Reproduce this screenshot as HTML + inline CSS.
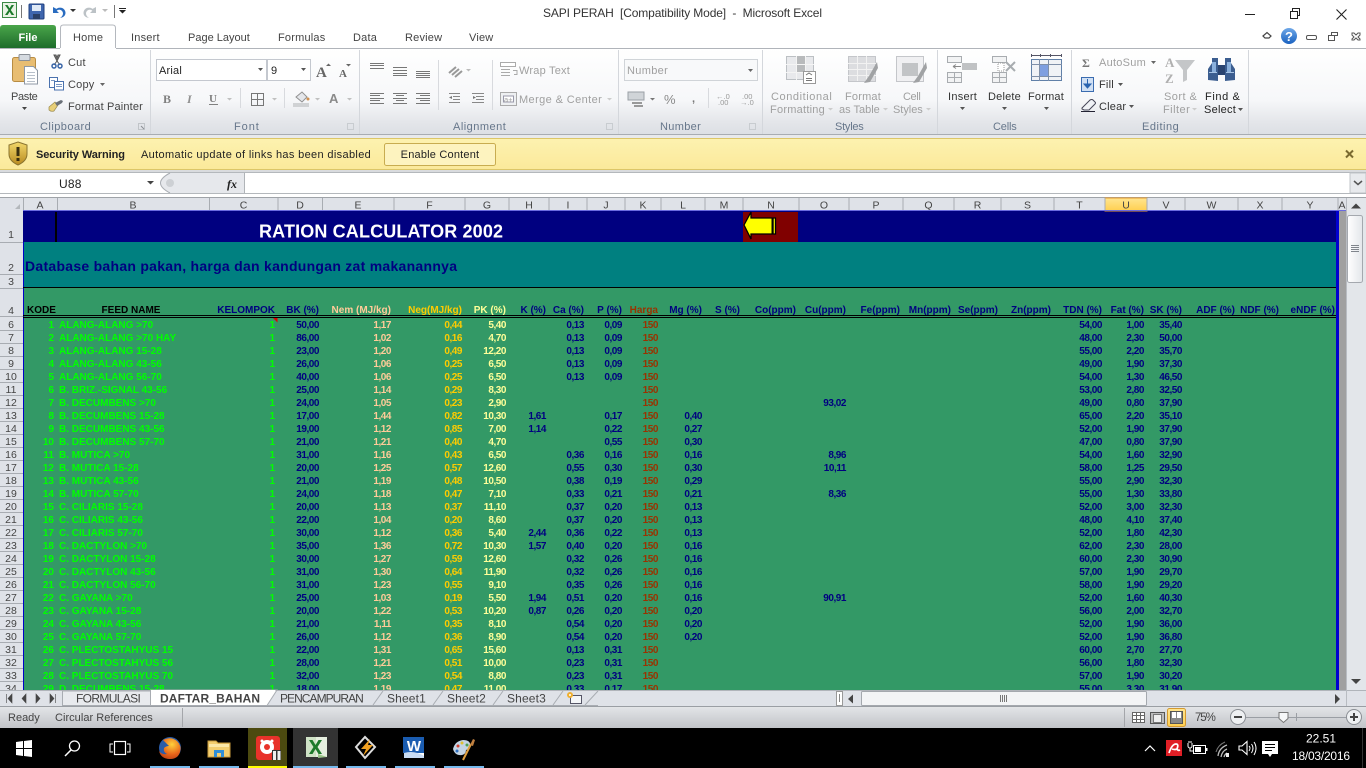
<!DOCTYPE html>
<html><head><meta charset="utf-8"><title>SAPI PERAH - Microsoft Excel</title>
<style>
html,body{margin:0;padding:0;width:1366px;height:768px;overflow:hidden;background:#fff}
#bg{position:absolute;left:0;top:0;width:1366px;height:768px}
.s{position:absolute;left:23px;width:1313px;overflow:hidden}
table{border-collapse:collapse;table-layout:fixed;font:bold 10px "Liberation Sans",Arial,sans-serif;color:#000080}
td{padding:0 3px 0 0;height:13px;line-height:13px;text-align:right;white-space:nowrap;overflow:visible}
#d td{letter-spacing:-.45px}
#d td:nth-child(1),#d td:nth-child(2),#d td:nth-child(3){color:#0f0;letter-spacing:0}
#d td:nth-child(2){text-align:left;padding-left:2px;padding-right:0}
#d td:nth-child(5){color:#fc9}#d td:nth-child(6){color:#fc0}#d td:nth-child(7){color:#ff9}#d td:nth-child(11){color:#930}
#ov{position:absolute;left:0;top:0}
#ov text{font-family:"Liberation Sans",Arial,sans-serif;font-size:11px;fill:#444;letter-spacing:.2px;white-space:pre}
#ov .g{fill:#a0a0a0}
#ov .l{fill:#66768a}
#ov .h{font-size:10.5px;fill:#444;letter-spacing:0;text-anchor:middle}
#ov .m{text-anchor:middle}
</style></head><body>
<svg id="bg" viewBox="0 0 1366 768">
<rect x="23" y="211" width="1313" height="31" fill="#000080"/>
<rect x="23" y="242" width="1313" height="45" fill="#008080"/>
<rect x="23" y="287" width="1313" height="403" fill="#396"/>
</svg>
<div class="s" style="top:304px;height:13px"><table style="width:1315px">
<colgroup><col width="34"><col width="152"><col width="69"><col width="44"><col width="72"><col width="71"><col width="44"><col width="40"><col width="38"><col width="38"><col width="36"><col width="44"><col width="38"><col width="56"><col width="50"><col width="54"><col width="51"><col width="47"><col width="53"><col width="51"><col width="42"><col width="38"><col width="53"><col width="44"><col width="56"></colgroup>
<tr><td style="color:#000;text-align:left;padding-left:4px;padding-right:0">KODE</td><td style="color:#000;text-align:center;padding:0 4px 0 0">FEED NAME</td><td>KELOMPOK</td><td>BK (%)</td><td style="color:#fc9">Nem (MJ/kg)</td><td style="color:#fc0">Neg(MJ/kg)</td><td style="color:#ff9">PK (%)</td><td>K (%)</td><td>Ca (%)</td><td>P (%)</td><td style="color:#930">Harga</td><td>Mg (%)</td><td>S (%)</td><td>Co(ppm)</td><td>Cu(ppm)</td><td>Fe(ppm)</td><td>Mn(ppm)</td><td>Se(ppm)</td><td>Zn(ppm)</td><td>TDN (%)</td><td>Fat (%)</td><td>SK (%)</td><td>ADF (%)</td><td>NDF (%)</td><td>eNDF (%)</td></tr>
</table></div>
<div class="s" style="top:319px;height:371px"><table id="d" style="width:1162px">
<colgroup><col width="34"><col width="152"><col width="69"><col width="44"><col width="72"><col width="71"><col width="44"><col width="40"><col width="38"><col width="38"><col width="36"><col width="44"><col width="38"><col width="56"><col width="50"><col width="54"><col width="51"><col width="47"><col width="53"><col width="51"><col width="42"><col width="38"></colgroup>
<tr><td>1<td>ALANG-ALANG &gt;70<td>1<td>50,00<td>1,17<td>0,44<td>5,40<td><td>0,13<td>0,09<td>150<td><td colspan=2><td><td colspan=4><td>54,00<td>1,00<td>35,40
<tr><td>2<td>ALANG-ALANG &gt;70 HAY<td>1<td>86,00<td>1,02<td>0,16<td>4,70<td><td>0,13<td>0,09<td>150<td><td colspan=2><td><td colspan=4><td>48,00<td>2,30<td>50,00
<tr><td>3<td>ALANG-ALANG 15-28<td>1<td>23,00<td>1,20<td>0,49<td>12,20<td><td>0,13<td>0,09<td>150<td><td colspan=2><td><td colspan=4><td>55,00<td>2,20<td>35,70
<tr><td>4<td>ALANG-ALANG 43-56<td>1<td>26,00<td>1,06<td>0,25<td>6,50<td><td>0,13<td>0,09<td>150<td><td colspan=2><td><td colspan=4><td>49,00<td>1,90<td>37,30
<tr><td>5<td>ALANG-ALANG 56-70<td>1<td>40,00<td>1,06<td>0,25<td>6,50<td><td>0,13<td>0,09<td>150<td><td colspan=2><td><td colspan=4><td>54,00<td>1,30<td>46,50
<tr><td>6<td>B. BRIZ.-SIGNAL 43-56<td>1<td>25,00<td>1,14<td>0,29<td>8,30<td><td><td><td>150<td><td colspan=2><td><td colspan=4><td>53,00<td>2,80<td>32,50
<tr><td>7<td>B. DECUMBENS &gt;70<td>1<td>24,00<td>1,05<td>0,23<td>2,90<td><td><td><td>150<td><td colspan=2><td>93,02<td colspan=4><td>49,00<td>0,80<td>37,90
<tr><td>8<td>B. DECUMBENS 15-28<td>1<td>17,00<td>1,44<td>0,82<td>10,30<td>1,61<td><td>0,17<td>150<td>0,40<td colspan=2><td><td colspan=4><td>65,00<td>2,20<td>35,10
<tr><td>9<td>B. DECUMBENS 43-56<td>1<td>19,00<td>1,12<td>0,85<td>7,00<td>1,14<td><td>0,22<td>150<td>0,27<td colspan=2><td><td colspan=4><td>52,00<td>1,90<td>37,90
<tr><td>10<td>B. DECUMBENS 57-70<td>1<td>21,00<td>1,21<td>0,40<td>4,70<td><td><td>0,55<td>150<td>0,30<td colspan=2><td><td colspan=4><td>47,00<td>0,80<td>37,90
<tr><td>11<td>B. MUTICA &gt;70<td>1<td>31,00<td>1,16<td>0,43<td>6,50<td><td>0,36<td>0,16<td>150<td>0,16<td colspan=2><td>8,96<td colspan=4><td>54,00<td>1,60<td>32,90
<tr><td>12<td>B. MUTICA 15-28<td>1<td>20,00<td>1,25<td>0,57<td>12,60<td><td>0,55<td>0,30<td>150<td>0,30<td colspan=2><td>10,11<td colspan=4><td>58,00<td>1,25<td>29,50
<tr><td>13<td>B. MUTICA 43-56<td>1<td>21,00<td>1,19<td>0,48<td>10,50<td><td>0,38<td>0,19<td>150<td>0,29<td colspan=2><td><td colspan=4><td>55,00<td>2,90<td>32,30
<tr><td>14<td>B. MUTICA 57-70<td>1<td>24,00<td>1,18<td>0,47<td>7,10<td><td>0,33<td>0,21<td>150<td>0,21<td colspan=2><td>8,36<td colspan=4><td>55,00<td>1,30<td>33,80
<tr><td>15<td>C. CILIARIS 15-28<td>1<td>20,00<td>1,13<td>0,37<td>11,10<td><td>0,37<td>0,20<td>150<td>0,13<td colspan=2><td><td colspan=4><td>52,00<td>3,00<td>32,30
<tr><td>16<td>C. CILIARIS 43-56<td>1<td>22,00<td>1,04<td>0,20<td>8,60<td><td>0,37<td>0,20<td>150<td>0,13<td colspan=2><td><td colspan=4><td>48,00<td>4,10<td>37,40
<tr><td>17<td>C. CILIARIS 57-70<td>1<td>30,00<td>1,12<td>0,36<td>5,40<td>2,44<td>0,36<td>0,22<td>150<td>0,13<td colspan=2><td><td colspan=4><td>52,00<td>1,80<td>42,30
<tr><td>18<td>C. DACTYLON &gt;70<td>1<td>35,00<td>1,36<td>0,72<td>10,30<td>1,57<td>0,40<td>0,20<td>150<td>0,16<td colspan=2><td><td colspan=4><td>62,00<td>2,30<td>28,00
<tr><td>19<td>C. DACTYLON 15-28<td>1<td>30,00<td>1,27<td>0,59<td>12,60<td><td>0,32<td>0,26<td>150<td>0,16<td colspan=2><td><td colspan=4><td>60,00<td>2,30<td>30,90
<tr><td>20<td>C. DACTYLON 43-56<td>1<td>31,00<td>1,30<td>0,64<td>11,90<td><td>0,32<td>0,26<td>150<td>0,16<td colspan=2><td><td colspan=4><td>57,00<td>1,90<td>29,70
<tr><td>21<td>C. DACTYLON 56-70<td>1<td>31,00<td>1,23<td>0,55<td>9,10<td><td>0,35<td>0,26<td>150<td>0,16<td colspan=2><td><td colspan=4><td>58,00<td>1,90<td>29,20
<tr><td>22<td>C. GAYANA &gt;70<td>1<td>25,00<td>1,03<td>0,19<td>5,50<td>1,94<td>0,51<td>0,20<td>150<td>0,16<td colspan=2><td>90,91<td colspan=4><td>52,00<td>1,60<td>40,30
<tr><td>23<td>C. GAYANA 15-28<td>1<td>20,00<td>1,22<td>0,53<td>10,20<td>0,87<td>0,26<td>0,20<td>150<td>0,20<td colspan=2><td><td colspan=4><td>56,00<td>2,00<td>32,70
<tr><td>24<td>C. GAYANA 43-56<td>1<td>21,00<td>1,11<td>0,35<td>8,10<td><td>0,54<td>0,20<td>150<td>0,20<td colspan=2><td><td colspan=4><td>52,00<td>1,90<td>36,00
<tr><td>25<td>C. GAYANA 57-70<td>1<td>26,00<td>1,12<td>0,36<td>8,90<td><td>0,54<td>0,20<td>150<td>0,20<td colspan=2><td><td colspan=4><td>52,00<td>1,90<td>36,80
<tr><td>26<td>C. PLECTOSTAHYUS 15<td>1<td>22,00<td>1,31<td>0,65<td>15,60<td><td>0,13<td>0,31<td>150<td><td colspan=2><td><td colspan=4><td>60,00<td>2,70<td>27,70
<tr><td>27<td>C. PLECTOSTAHYUS 56<td>1<td>28,00<td>1,21<td>0,51<td>10,00<td><td>0,23<td>0,31<td>150<td><td colspan=2><td><td colspan=4><td>56,00<td>1,80<td>32,30
<tr><td>28<td>C. PLECTOSTAHYUS 70<td>1<td>32,00<td>1,23<td>0,54<td>8,80<td><td>0,23<td>0,31<td>150<td><td colspan=2><td><td colspan=4><td>57,00<td>1,90<td>30,20
<tr><td>29<td>D. DECUMBENS 15-28<td>1<td>18,00<td>1,19<td>0,47<td>11,00<td><td>0,33<td>0,17<td>150<td><td colspan=2><td><td colspan=4><td>55,00<td>3,30<td>31,90
</table></div>
<svg id="ov" width="1366" height="768" viewBox="0 0 1366 768">
<defs>
<linearGradient id="rb" x1="0" y1="0" x2="0" y2="1"><stop offset="0" stop-color="#fff"/><stop offset=".6" stop-color="#f6f7f9"/><stop offset=".85" stop-color="#e4e6ea"/><stop offset="1" stop-color="#dcdfe4"/></linearGradient>
<linearGradient id="fl" x1="0" y1="0" x2="0" y2="1"><stop offset="0" stop-color="#4aa54a"/><stop offset="1" stop-color="#1d6c2b"/></linearGradient>
<linearGradient id="st" x1="0" y1="0" x2="0" y2="1"><stop offset="0" stop-color="#e4e6e9"/><stop offset="1" stop-color="#c2c4c8"/></linearGradient>
<linearGradient id="sw" x1="0" y1="0" x2="0" y2="1"><stop offset="0" stop-color="#fdf2b0"/><stop offset="1" stop-color="#fbe99a"/></linearGradient>
<linearGradient id="gd" x1="0" y1="0" x2="0" y2="1"><stop offset="0" stop-color="#ffe590"/><stop offset="1" stop-color="#ffcf4f"/></linearGradient>
<linearGradient id="sb" x1="0" y1="0" x2="1" y2="0"><stop offset="0" stop-color="#fff"/><stop offset="1" stop-color="#e3e6ea"/></linearGradient>
<linearGradient id="sh" x1="0" y1="0" x2="0" y2="1"><stop offset="0" stop-color="#f2d86a"/><stop offset="1" stop-color="#b88a20"/></linearGradient>
<radialGradient id="ff" cx=".6" cy=".3" r=".8"><stop offset="0" stop-color="#ffd23c"/><stop offset=".6" stop-color="#e8651a"/><stop offset="1" stop-color="#b83a10"/></radialGradient>
<linearGradient id="hb" x1="0" y1="0" x2="0" y2="1"><stop offset="0" stop-color="#6fa8e8"/><stop offset="1" stop-color="#1a62c0"/></linearGradient>
</defs>

<!-- title bar / tabs -->
<rect width="1366" height="48" fill="#fff"/>
<text x="543" y="17" textLength="279" style="font-size:12px;fill:#333;letter-spacing:0">SAPI PERAH  [Compatibility Mode]  -  Microsoft Excel</text>
<rect x="2.5" y="2.5" width="14" height="15" fill="#e9f3e4" stroke="#3c8a46"/><path d="M5 5l3.5 5L5 15h2.6l2-3.2 2 3.2h2.6l-3.4-5L14 5h-2.4l-2 3.2L7.5 5z" fill="#1d7a2b"/>
<path d="M21.5 5v13M114.5 5v13" stroke="#777"/>
<rect x="29" y="4" width="15" height="15" rx="1" fill="#3f66ae" stroke="#1f3f7e"/><rect x="32" y="5" width="9" height="6" fill="#dfe9f6"/><rect x="33" y="14" width="7" height="5" fill="#2a3f66"/>
<path d="M53 7v6h6l-2.3-2.3c2.6-2 6-.6 6.3 2.6 0 2-1 3.6-3 4.6 4-.4 6-3 5.4-6-.8-4-5.6-5.6-9-3z" fill="#2a6cc0"/>
<path d="M70 9h6l-3 3z" fill="#333"/>
<path d="M96 7v6h-6l2.3-2.3c-2.6-2-6-.6-6.3 2.6 0 2 1 3.6 3 4.6-4-.4-6-3-5.4-6 .8-4 5.6-5.6 9-3z" fill="#bcc2c6"/>
<path d="M102 9h6l-3 3z" fill="#bbb"/>
<path d="M119 8h7v1h-7zM119 10h7l-3.5 3.5z" fill="#222"/>
<path d="M1245 14.500h10" stroke="#222" stroke-width="1"/>
<path d="M1290.500 11.500h7v7h-7zM1292.500 11v-2.500h7v7h-2" fill="none" stroke="#222"/>
<path d="M1336.500 9.500l10 10M1346.500 9.500l-10 10" stroke="#222" stroke-width="1.100"/>
<path d="M1263 36l4-3.500 4 3.500-2 2h-4z" fill="none" stroke="#444" stroke-width="1.200"/>
<circle cx="1289" cy="36" r="8" fill="url(#hb)"/><text x="1289" y="41" class="m" style="font-size:13px;font-weight:bold;fill:#fff;letter-spacing:0">?</text>
<rect x="1306.500" y="35.500" width="10" height="4" rx="1.500" fill="#fff" stroke="#555"/>
<path d="M1331.500 35.500h6v-3h-6zM1328.500 35.500h6v5h-6z" fill="#fff" stroke="#555"/>
<path d="M1352 33l2 0 2 2 2-2 2 0v2l-2 2 2 2v1h-2l-2-2-2 2h-2v-1l2-2-2-2z" fill="#fff" stroke="#555"/>

<path d="M0 28q0-3 3-3h50q3 0 3 3v20H0z" fill="url(#fl)"/>
<text x="28" y="41" class="m" style="font-weight:bold;fill:#fff;letter-spacing:0">File</text>
<path d="M60.500 49v-21q0-3 3-3h49q3 0 3 3v21" fill="#fff" stroke="#b4b8be"/>
<rect x="0" y="48" width="1366" height="87" fill="url(#rb)"/>
<path d="M0 48.500h60M116 48.500h1250" stroke="#b0b4ba"/>
<rect x="61" y="47" width="54" height="3" fill="#fff"/>
<text x="73" y="41">Home</text><text x="131" y="41">Insert</text><text x="188" y="41" textLength="62">Page Layout</text><text x="278" y="41">Formulas</text><text x="353" y="41">Data</text><text x="405" y="41">Review</text><text x="469" y="41">View</text>

<!-- ribbon separators -->
<path d="M150.500 50v84M359.500 50v84M618.500 50v84M762.500 50v84M937.500 50v84M1071.500 50v84M1248.500 50v84" stroke="#d4d7dc"/>
<path d="M240.500 88v20M284.500 88v20M438.500 60v50M492.500 60v50M708.500 88v20" stroke="#d8dade"/>
<rect y="134" width="1366" height="1" fill="#a8acb2"/>
<rect y="135" width="1366" height="3" fill="#e8e9eb"/>

<!-- clipboard -->
<rect x="12.500" y="57.500" width="23" height="24" rx="2" fill="#e8bd72" stroke="#b88c42"/><rect x="19" y="54.500" width="11" height="6" rx="1" fill="#d5dae0" stroke="#8a8f96"/>
<path d="M24.500 66.500h9l4 4v13.500h-13z" fill="#fff" stroke="#8f98a4"/><path d="M27 72.500h8M27 75.500h8M27 78.500h8M27 81.500h8" stroke="#b8c0ca"/>
<text x="11" y="100" textLength="27">Paste</text><path d="M22 107h5l-2.500 3z" fill="#444"/>
<path d="M54 55l3 6 3-6-2 0-1 3-1-3zM57 61l-3 4M57 61l3 4" fill="#888" stroke="#555"/><circle cx="54" cy="66" r="2" fill="none" stroke="#3a66a8" stroke-width="1.500"/><circle cx="60" cy="66" r="2" fill="none" stroke="#3a66a8" stroke-width="1.500"/>
<text x="68" y="66">Cut</text>
<rect x="49.500" y="77.500" width="8" height="10" fill="#fff" stroke="#4a72ae"/><rect x="54.500" y="81.500" width="9" height="8.500" fill="#fff" stroke="#4a72ae"/><path d="M56 84.500h6M56 86.500h6M51 80.500h4" stroke="#7a98c4"/>
<text x="68" y="88">Copy</text><path d="M100 83h5l-2.500 3z" fill="#666"/>
<path d="M49 107l6-5 3 3-4 6q-3 1-5-1z" fill="#e8cf78" stroke="#9a8a4c" stroke-width=".7"/><path d="M55 103l6-3 2 1-1 2-5 3z" fill="#6a7078"/>
<text x="68" y="110" textLength="75">Format Painter</text>
<text x="40" y="130" class="l" textLength="51">Clipboard</text>
<path d="M138.500 123.500h6v6h-6z" fill="none" stroke="#c0c4c8"/><path d="M141 126l3 3" stroke="#8a8e94"/>

<!-- font -->
<rect x="156.500" y="59.500" width="110" height="21" fill="#fff" stroke="#c4c8cf"/><rect x="267.500" y="59.500" width="43" height="21" fill="#fff" stroke="#c4c8cf"/>
<text x="159" y="74" style="fill:#222">Arial</text><text x="271" y="74" style="fill:#222">9</text>
<path d="M258 68h5l-2.500 3zM301 68h5l-2.500 3z" fill="#555"/>
<text x="316" y="77" style="font:bold 15px 'Liberation Serif',serif;fill:#666;letter-spacing:0">A</text><path d="M326 66l2.500-2.500 2.500 2.500z" fill="#666"/>
<text x="339" y="77" style="font:bold 11px 'Liberation Serif',serif;fill:#666;letter-spacing:0">A</text><path d="M346 64h5l-2.500 2.500z" fill="#666"/>
<text x="163" y="103" style="font:bold 12px 'Liberation Serif',serif;fill:#808080;letter-spacing:0">B</text>
<text x="187" y="103" style="font:italic bold 12px 'Liberation Serif',serif;fill:#909090;letter-spacing:0">I</text>
<text x="209" y="102" style="font:bold 11px 'Liberation Serif',serif;fill:#808080;letter-spacing:0">U</text><path d="M209 104.500h9" stroke="#808080"/>
<path d="M227 98h5l-2.500 2.500zM272 98h5l-2.500 2.500zM315 98h5l-2.500 2.500zM347 98h5l-2.500 2.500z" fill="#c0c0c0"/>
<path d="M251.500 93.500h12v12h-12zM257.500 93.500v12M251.500 99.500h12" fill="none" stroke="#777"/>
<path d="M296 97l6-5 5 5-5 5z" fill="#e4e6ea" stroke="#909090"/><rect x="293" y="103" width="16" height="4" fill="#d0d2d4"/><circle cx="308" cy="99" r="1.500" fill="#d09050"/>
<text x="329" y="103" style="font:bold 13px 'Liberation Sans',sans-serif;fill:#8a8a8a;letter-spacing:0">A</text>
<text x="234" y="130" class="l" textLength="25">Font</text>
<path d="M347.500 123.500h6v6h-6z" fill="none" stroke="#c8ccd0"/>

<!-- alignment -->
<path d="M370 63.500h14M370 65.500h14M370 68.500h14M393 67.500h14M393 70.500h14M393 73.500h14M393 75.500h14M416 71.500h14M416 73.500h14M416 75.500h14M416 77.500h14" stroke="#777"/>
<path d="M370 93.500h14M370 95.500h10M370 98.500h14M370 100.500h10M370 103.500h14M393 93.500h14M396 95.500h8M393 98.500h14M396 100.500h8M393 103.500h14M416 93.500h14M420 95.500h10M416 98.500h14M420 100.500h10M416 103.500h14" stroke="#777"/>
<path d="M449 73l7-6M452 75l7-6M455 77l7-6" stroke="#999" stroke-width="2"/><path d="M466 69h5l-2.500 2.500z" fill="#bbb"/>
<path d="M449 93.500h11M453 96.500h7M453 99.500h7M449 102.500h11M472 93.500h12M476 96.500h8M476 99.500h8M472 102.500h12" stroke="#888"/><path d="M452 96l-3 1.500 3 1.500zM473 96l3 1.500-3 1.500z" fill="#777"/>
<rect x="500.500" y="62.500" width="15" height="4" fill="#fff" stroke="#aaa"/><path d="M501 69.500h9M501 72.500h9M501 75.500h9" stroke="#aaa"/><path d="M513 70.500h4v4h-3" fill="none" stroke="#aaa"/>
<text x="519" y="74" class="g" textLength="51">Wrap Text</text>
<rect x="500.500" y="92.500" width="16" height="13" fill="#eef0f2" stroke="#aaa"/><rect x="503.500" y="96" width="10" height="6" fill="#fff" stroke="#99a"/><text x="504" y="102" class="g" style="font-size:7.500px;letter-spacing:0">a+</text>
<text x="519" y="103" class="g" textLength="83">Merge &amp; Center</text><path d="M607 98h5l-2.500 2.500z" fill="#ccc"/>
<text x="453" y="130" class="l" textLength="53">Alignment</text>
<path d="M606.500 123.500h6v6h-6z" fill="none" stroke="#c8ccd0"/>

<!-- number -->
<rect x="624.500" y="59.500" width="133" height="21" fill="#f8f9fa" stroke="#d0d4d8"/>
<text x="627" y="74" class="g" textLength="41">Number</text><path d="M748 69h5l-2.500 3z" fill="#666"/>
<rect x="628" y="92" width="16" height="8" fill="#d0d4d8" stroke="#9aa0a6"/><path d="M632 103h10M634 106h9" stroke="#999" stroke-width="2"/>
<path d="M650 98h5l-2.500 2.500z" fill="#777"/>
<text x="664" y="104" style="font-size:13px;fill:#8a8a8a;letter-spacing:0">%</text>
<text x="692" y="102" style="font:bold 11px 'Liberation Sans',sans-serif;fill:#777">,</text>
<text x="716" y="99" style="font-size:7.500px;fill:#999;letter-spacing:0">←.0</text><text x="718" y="105" style="font-size:7.500px;fill:#999;letter-spacing:0">.00</text>
<text x="742" y="99" style="font-size:7.500px;fill:#999;letter-spacing:0">.00</text><text x="740" y="105" style="font-size:7.500px;fill:#999;letter-spacing:0">→.0</text>
<text x="660" y="130" class="l" textLength="41">Number</text>
<path d="M749.500 123.500h6v6h-6z" fill="none" stroke="#c8ccd0"/>

<!-- styles -->
<g stroke="#bcc0c4" fill="#e8e9ec"><rect x="786.500" y="56.500" width="27" height="23"/></g>
<path d="M796 56h9v16h-9z" fill="#b8babc"/><path d="M786 64.500h28M786 72.500h28M796.500 56v24M805.500 56v24" stroke="#f4f4f4"/>
<rect x="803.500" y="71.500" width="12" height="12" fill="#fff" stroke="#999"/><path d="M806 75l3-2 3 2M806 78.500h6M806 80.500h6" fill="none" stroke="#777"/>
<text x="771" y="100" class="g" textLength="61">Conditional</text><text x="770" y="113" class="g" textLength="55">Formatting</text><path d="M828 108h5l-2.500 2.500z" fill="#ccc"/>
<rect x="848.500" y="56.500" width="27" height="25" fill="#dcdde0" stroke="#c4c6ca"/><path d="M848 63.500h28M848 69.500h28M848 75.500h28M857.500 56v25M866.500 56v25" stroke="#f2f2f2"/>
<path d="M877 62l-8 14-5 7 6-1 8-14z" fill="#a0a2a4"/>
<text x="845" y="100" class="g" textLength="36">Format</text><text x="839" y="113" class="g" textLength="41">as Table</text><path d="M883 108h5l-2.500 2.500z" fill="#ccc"/>
<rect x="896.500" y="56.500" width="27" height="25" fill="#f0f0f2" stroke="#c4c6ca"/><rect x="902" y="63" width="16" height="13" fill="#c2c4c6"/>
<path d="M926 62l-8 14-5 7 6-1 8-14z" fill="#a0a2a4"/>
<text x="903" y="100" class="g" textLength="18">Cell</text><text x="893" y="113" class="g" textLength="30">Styles</text><path d="M926 108h5l-2.500 2.500z" fill="#ccc"/>
<text x="835" y="130" class="l" textLength="29">Styles</text>

<!-- cells -->
<g fill="#f2f3f4" stroke="#a8acb0"><rect x="947.500" y="56.500" width="14" height="6"/><rect x="947.500" y="72.500" width="14" height="10"/><path d="M954.500 72.500v10M947.500 77.500h14"/></g>
<rect x="962" y="63" width="15" height="7" fill="#c0c2c4"/><path d="M953 66.500h8M953 66.500l3-2M953 66.500l3 2" stroke="#888" fill="none"/>
<text x="948" y="100" textLength="29" style="fill:#333">Insert</text><path d="M960 107h5l-2.500 3z" fill="#555"/>
<g fill="#f2f3f4" stroke="#a8acb0"><rect x="992.500" y="56.500" width="14" height="6"/><rect x="992.500" y="72.500" width="14" height="10"/><path d="M999.500 72.500v10M992.500 77.500h14"/></g>
<path d="M998 63h6v8h-6z" fill="#fff" stroke="#999" stroke-dasharray="1 1"/><path d="M1006 62l9 9M1015 62l-9 9" stroke="#a8acb0" stroke-width="2"/>
<text x="988" y="100" textLength="33" style="fill:#333">Delete</text><path d="M1002 107h5l-2.500 3z" fill="#555"/>
<rect x="1031.500" y="59.500" width="30" height="21" fill="#f0f2f6" stroke="#6080a8"/><rect x="1039" y="64" width="9" height="12" fill="#7f9fe0"/><path d="M1039.500 59v22M1048.500 59v22M1031 64.500h31M1031 76.500h31" stroke="#7f8fa8"/>
<path d="M1031.500 55.500h30M1031.500 54v3M1061.500 54v3M1040.500 54v3M1050.500 54v3" stroke="#556"/>
<text x="1028" y="100" textLength="36" style="fill:#333">Format</text><path d="M1044 107h5l-2.500 3z" fill="#555"/>
<text x="993" y="130" class="l" textLength="24">Cells</text>

<!-- editing -->
<text x="1082" y="67" style="font:bold 12px 'Liberation Serif',serif;fill:#777;letter-spacing:0">Σ</text>
<text x="1099" y="66" class="g" textLength="47">AutoSum</text><path d="M1151 61h5l-2.500 3z" fill="#666"/>
<rect x="1081.500" y="77.500" width="12" height="14" fill="#d0e0f4" stroke="#3a6cb0"/><path d="M1087.500 79v8M1084 84l3.500 4 3.500-4z" fill="#2a64b0" stroke="#2a64b0"/>
<text x="1099" y="88" style="fill:#333">Fill</text><path d="M1118 83h5l-2.500 3z" fill="#555"/>
<path d="M1082 108l8-8q2-1 3 0l2 2q1 1 0 2l-6 6h-5l-2-1z" fill="#f0f2f6" stroke="#445"/><path d="M1081 111.500h14" stroke="#223"/>
<text x="1099" y="110" style="fill:#333">Clear</text><path d="M1129 105h5l-2.500 3z" fill="#555"/>
<path d="M1175 60h20l-8 10v10l-4 2V70z" fill="#c4c6c8"/><text x="1165" y="67" style="font:bold 13px 'Liberation Serif',serif;fill:#b0b0b0;letter-spacing:0">A</text><text x="1165" y="83" style="font:bold 13px 'Liberation Serif',serif;fill:#b0b0b0;letter-spacing:0">Z</text>
<text x="1164" y="100" class="g" textLength="33">Sort &amp;</text><text x="1163" y="113" class="g" textLength="27">Filter</text><path d="M1192 108h5l-2.500 2.500z" fill="#ccc"/>
<path d="M1208 80v-11l4-6v-5h6v23zM1225 81v-23h6v5l4 6v11z" fill="#3c5e90"/><path d="M1212 62h4v10h-4zM1227 62h4v10h-4z" fill="#8ab0dc"/><rect x="1218" y="65" width="7" height="10" fill="#2a4470"/><path d="M1209 72.500h8M1226 72.500h8" stroke="#a8c4e4"/>
<text x="1205" y="100" textLength="35" style="fill:#222">Find &amp;</text><text x="1204" y="113" textLength="32" style="fill:#222">Select</text><path d="M1238 108h5l-2.500 3z" fill="#555"/>
<text x="1142" y="130" class="l" textLength="37">Editing</text>

<!-- security bar -->
<rect y="138" width="1366" height="32" fill="url(#sw)"/><path d="M0 138.500h1366M0 169.500h1366" stroke="#dcc668"/>
<rect y="170" width="1366" height="2" fill="#d9dbde"/>
<path d="M18 142l9 3v9q0 7-9 11-9-4-9-11v-9z" fill="url(#sh)" stroke="#8a7430"/><rect x="16.500" y="147" width="3" height="9" fill="#3a2f10"/><rect x="16.500" y="158" width="3" height="3" fill="#3a2f10"/>
<text x="36" y="158" textLength="89" style="font-weight:bold;fill:#222;letter-spacing:0">Security Warning</text>
<text x="141" y="158" textLength="230" style="fill:#222">Automatic update of links has been disabled</text>
<rect x="384.500" y="143.500" width="111" height="22" rx="2" fill="#fdf3bf" stroke="#c8ac50"/>
<text x="440" y="158" class="m" style="fill:#222">Enable Content</text>
<path d="M1346 150.500l7 7M1353 150.500l-7 7" stroke="#7a6a30" stroke-width="2"/>

<!-- formula bar -->
<rect y="172" width="1366" height="26" fill="#fff"/>
<rect y="172" width="1366" height="1" fill="#b4b8bc"/>
<path d="M170 173q-19 10 0 20h74v-20z" fill="#e6e8ec"/>
<path d="M170 173q-19 10 0 20" fill="none" stroke="#a8acb2"/><circle cx="170" cy="183" r="4" fill="#cdd0d4"/>
<text x="59" y="188" style="font-size:12px;fill:#222;letter-spacing:.2px">U88</text>
<path d="M147 181h7l-3.500 3.500z" fill="#444"/>
<text x="227" y="188" style="font:italic bold 12px 'Liberation Serif',serif;fill:#222;letter-spacing:0">fx</text>
<path d="M244.500 173v20" stroke="#b0b4b8"/>
<rect x="1350" y="173" width="16" height="20" fill="#e8eaed" stroke="#c0c4c8"/><path d="M1354 181l4 3.500 4-3.500" fill="none" stroke="#555" stroke-width="1.500"/>
<rect y="193" width="1366" height="1" fill="#b4b8bc"/>
<rect y="197" width="1366" height="1" fill="#9fa3a8"/>

<!-- col headers -->
<rect y="198" width="1366" height="13" fill="#dfe2e8"/>
<rect x="1105" y="198" width="42" height="13" fill="url(#gd)" stroke="#e49a30"/>
<path d="M23.500 198v13M57.500 198v13M209.500 198v13M278 198v13M322.500 198v13M394 198v13M465 198v13M509 198v13M549 198v13M587 198v13M625 198v13M661 198v13M705 198v13M743 198v13M799 198v13M849 198v13M903 198v13M954 198v13M1001 198v13M1054 198v13M1105 198v13M1147 198v13M1185 198v13M1238 198v13M1282 198v13M1338 198v13" stroke="#a8acb2"/>
<path d="M15 209l5-5v5z" fill="#b4b8bc"/>
<g class="hd"><text class="h" y="208.500"><tspan x="40">A</tspan><tspan x="133">B</tspan><tspan x="243.500">C</tspan><tspan x="300">D</tspan><tspan x="358">E</tspan><tspan x="429.500">F</tspan><tspan x="487">G</tspan><tspan x="529">H</tspan><tspan x="568">I</tspan><tspan x="606">J</tspan><tspan x="643">K</tspan><tspan x="683">L</tspan><tspan x="724">M</tspan><tspan x="771">N</tspan><tspan x="824">O</tspan><tspan x="876">P</tspan><tspan x="928.500">Q</tspan><tspan x="977.500">R</tspan><tspan x="1027.500">S</tspan><tspan x="1079.500">T</tspan><tspan x="1126">U</tspan><tspan x="1166">V</tspan><tspan x="1211.500">W</tspan><tspan x="1260">X</tspan><tspan x="1310">Y</tspan><tspan x="1342">A</tspan></text></g>
<rect x="23" y="210" width="1323" height="1" fill="#6a6ae0"/>

<!-- row header -->
<rect y="211" width="23" height="479" fill="#dfe2e8"/>
<path d="M0 242.500h23M0 274.500h23M0 288.500h23M0 316.500h23M0 330.500h23M0 343.500h23M0 356.500h23M0 369.500h23M0 382.500h23M0 395.500h23M0 408.500h23M0 421.500h23M0 434.500h23M0 447.500h23M0 460.500h23M0 473.500h23M0 486.500h23M0 499.500h23M0 512.500h23M0 525.500h23M0 538.500h23M0 551.500h23M0 564.500h23M0 577.500h23M0 590.500h23M0 603.500h23M0 616.500h23M0 629.500h23M0 642.500h23M0 655.500h23M0 668.500h23M0 681.500h23" stroke="#a8acb2"/>
<text class="h"><tspan x="11" y="238">1</tspan><tspan x="11" y="271">2</tspan><tspan x="11" y="285">3</tspan><tspan x="11" y="314">4</tspan><tspan x="11" y="328">6</tspan><tspan x="11" y="341">7</tspan><tspan x="11" y="354">8</tspan><tspan x="11" y="367">9</tspan><tspan x="11" y="380">10</tspan><tspan x="11" y="393">11</tspan><tspan x="11" y="406">12</tspan><tspan x="11" y="419">13</tspan><tspan x="11" y="432">14</tspan><tspan x="11" y="445">15</tspan><tspan x="11" y="458">16</tspan><tspan x="11" y="471">17</tspan><tspan x="11" y="484">18</tspan><tspan x="11" y="497">19</tspan><tspan x="11" y="510">20</tspan><tspan x="11" y="523">21</tspan><tspan x="11" y="536">22</tspan><tspan x="11" y="549">23</tspan><tspan x="11" y="562">24</tspan><tspan x="11" y="575">25</tspan><tspan x="11" y="588">26</tspan><tspan x="11" y="601">27</tspan><tspan x="11" y="614">28</tspan><tspan x="11" y="627">29</tspan><tspan x="11" y="640">30</tspan><tspan x="11" y="653">31</tspan><tspan x="11" y="666">32</tspan><tspan x="11" y="679">33</tspan><tspan x="11" y="692">34</tspan></text>

<!-- sheet decorations -->
<rect x="23" y="242" width="1" height="448" fill="#0000c8"/>
<rect x="55" y="212" width="2" height="30" fill="#000"/>
<text x="259" y="237.500" textLength="244" style="font-size:18px;font-weight:bold;fill:#fff;letter-spacing:0">RATION CALCULATOR 2002</text>
<text x="25" y="271" textLength="432" style="font-size:14px;font-weight:bold;fill:#000080;letter-spacing:0">Database bahan pakan, harga dan kandungan zat makanannya</text>
<rect x="23" y="287" width="1313" height="1" fill="#000"/>
<path d="M23 315.500h1313M23 317.500h1313" stroke="#000"/><path d="M1336 316.500h10" stroke="#6a5a30"/>
<path d="M273 318h4.500v4.500z" fill="#e00000"/>
<rect x="743" y="212" width="55" height="30" fill="#800000"/>
<path d="M744 225l7-13v6h24.500v16h-24.500v5z" fill="#ff0" stroke="#000" stroke-width="1.300"/>
<rect x="771.500" y="218" width="2.200" height="16" fill="#000"/>
<rect x="1336" y="211" width="3" height="479" fill="#0000d0"/>
<rect x="1339" y="211" width="7" height="479" fill="#a0a0a0"/>

<!-- v scrollbar -->
<rect x="1346" y="198" width="20" height="492" fill="#e3e6ea"/>
<path d="M1346.500 198v492" stroke="#b8bcc2"/>
<path d="M1351 208.500l5-5 5 5z" fill="#444"/>
<rect x="1347.500" y="215.500" width="15" height="67" rx="2" fill="url(#sb)" stroke="#a4a8ae"/>
<path d="M1351 245.500h8M1351 247.500h8M1351 249.500h8M1351 251.500h8" stroke="#80858c"/>
<path d="M1351 679l5 5 5-5z" fill="#444"/>

<!-- sheet tabs -->
<rect y="690" width="1366" height="16" fill="#dfe2e8"/>
<rect y="690" width="1366" height="1" fill="#b0b4ba"/>
<path d="M6.500 694v9M12 694l-4 4.500 4 4.500zM26 694l-4 4.500 4 4.500zM36 694l4 4.500-4 4.500zM50 694l4 4.500-4 4.500zM55.500 694v9" fill="#444" stroke="#444" stroke-width=".6"/>
<path d="M62.500 691v14.500h88v-14.500z" fill="#e8eaee" stroke="#a8acb2"/>
<text x="76" y="702.500" textLength="65" style="font-size:12px">FORMULASI</text>
<path d="M150.500 690v15.500h116.500l10-15.500z" fill="#fff" stroke="#a8acb2"/>
<rect x="151" y="690" width="124" height="1" fill="#fff"/>
<text x="160" y="702.500" textLength="100" style="font-size:12px;font-weight:bold;fill:#444;letter-spacing:0">DAFTAR_BAHAN</text>
<path d="M267 705.500h331M373 705l10-14M433 705l10-14M493 705l10-14M553 705l10-14M585 705l13-14" fill="none" stroke="#a8acb2"/>
<text x="280" y="702.500" textLength="84" style="font-size:12px">PENCAMPURAN</text>
<text x="387" y="702.500" textLength="39" style="font-size:12px">Sheet1</text>
<text x="447" y="702.500" textLength="39" style="font-size:12px">Sheet2</text>
<text x="507" y="702.500" textLength="39" style="font-size:12px">Sheet3</text>
<rect x="570.500" y="695.500" width="11" height="8" fill="#f4f6f8" stroke="#556"/><circle cx="570" cy="695" r="3" fill="#f0b030"/><circle cx="570" cy="695" r="1" fill="#fff"/>
<rect x="836.500" y="691.500" width="6" height="14" fill="#fff" stroke="#999"/><path d="M839.500 694v8" stroke="#888"/>
<path d="M853 694.500v9l-5-4.500z" fill="#444"/>
<rect x="861.500" y="691.500" width="285" height="14" rx="1" fill="#f3f4f6" stroke="#a4a8ae"/>
<path d="M1000.500 695v7M1002.500 695v7M1004.500 695v7M1006.500 695v7" stroke="#777"/>
<path d="M1335 694v10l5-5z" fill="#444"/>
<path d="M1346.500 690v16" stroke="#b8bcc2"/>

<!-- status bar -->
<rect y="706" width="1366" height="22" fill="url(#st)"/>
<rect y="706" width="1366" height="1" fill="#9a9ea4"/>
<text x="8" y="721" textLength="32">Ready</text><text x="55" y="721" textLength="98">Circular References</text>
<path d="M182.500 708v19M1124.500 708v19" stroke="#a4a6aa"/>
<path d="M1132.500 712.500h12v10h-12zM1136.500 712.500v10M1140.500 712.500v10M1132.500 715.500h12M1132.500 719.500h12" fill="#fff" stroke="#666"/>
<rect x="1150.500" y="712.500" width="14" height="11" fill="#bbb" stroke="#555"/><rect x="1153.500" y="714.500" width="8" height="8" fill="#eee" stroke="#777"/>
<rect x="1167.500" y="708.500" width="18" height="18" rx="2" fill="url(#gd)" stroke="#d49a30"/>
<rect x="1170.500" y="711.500" width="12" height="12" fill="#888" stroke="#555"/><rect x="1172" y="712" width="4" height="6" fill="#fff"/><rect x="1177" y="712" width="4" height="6" fill="#fff"/>
<text x="1195" y="721" textLength="21" style="font-size:11.500px">75%</text>
<circle cx="1238" cy="717" r="7.500" fill="#eef0f2" stroke="#8a8e94"/><path d="M1234 717h8" stroke="#444" stroke-width="2"/>
<path d="M1246 717.500h100" stroke="#9a9ea4"/><path d="M1296.500 713v8" stroke="#9a9ea4"/>
<path d="M1279 712.500h9v6l-4.500 4-4.500-4z" fill="#f6f7f8" stroke="#777"/>
<circle cx="1354" cy="717" r="7.500" fill="#eef0f2" stroke="#8a8e94"/><path d="M1350 717h8M1354 713v8" stroke="#444" stroke-width="2"/>

<!-- taskbar -->
<rect y="728" width="1366" height="40" fill="#000"/>
<path d="M16 742l7-1v7h-7zM24 741l8-1v8h-8zM16 749h7v7l-7-1zM24 749h8v8l-8-1z" fill="#fff"/>
<circle cx="74.500" cy="746" r="5" fill="none" stroke="#fff" stroke-width="1.300"/><path d="M71 750l-6 6" stroke="#fff" stroke-width="1.500"/>
<rect x="114.500" y="741.500" width="11" height="13" fill="none" stroke="#fff" stroke-width="1.200"/><path d="M113 744h-3v8h3M127 744h3v8h-3" fill="none" stroke="#fff"/>
<rect x="248" y="728" width="39" height="40" fill="#4c4a10"/>
<rect x="293" y="728" width="45" height="40" fill="#333"/>
<path d="M150 766h40v2h-40zM199 766h40v2h-40zM293 766h45v2h-45zM346 766h40v2h-40zM395 766h40v2h-40zM444 766h40v2h-40z" fill="#76b9ed"/>
<rect x="248" y="766" width="39" height="2" fill="#ff0"/>
<circle cx="170" cy="748" r="11" fill="#2a5ca8"/><path d="M163 740q8-4 14 1 5 5 3 11-2 7-10 7-9 0-11-8 3 4 8 3-4-2-3-6 2-2 5-2-3-3-6-6z" fill="url(#ff)"/>
<path d="M208 741h8l2 2h12v14h-22z" fill="#f3cf70" stroke="#c79a3c"/><path d="M214 750h10v7h-3v-4h-4v4h-3z" fill="#2f8fd8"/><rect x="209" y="744" width="20" height="3" fill="#fbe8a8"/>
<rect x="256" y="736" width="24" height="24" rx="3" fill="#e8322a"/><circle cx="267" cy="747" r="7" fill="#fff"/><circle cx="267" cy="747" r="3" fill="#e8322a"/><circle cx="262" cy="741" r="1.500" fill="#fff"/><circle cx="272" cy="741" r="1.500" fill="#fff"/>
<rect x="272" y="750" width="9" height="10" fill="#333"/><rect x="273" y="751" width="3" height="9" fill="#eee"/><rect x="277.500" y="751" width="3" height="9" fill="#eee"/>
<path d="M306 737h21v20h-21z" fill="#e6efe0"/><path d="M306 737h10v20h-10z" fill="#cfe2c6"/><path d="M309 740l4.500 7-4.500 7h3.500l3-5 3 5h3.500l-4.500-7 4.500-7h-3.500l-3 5-3-5z" fill="#1d7a2b"/><path d="M318 754l9 3-9 1z" fill="#9bc48a"/>
<path d="M365 737l10 10-10 11-9-11z" fill="none" stroke="#ddd" stroke-width="2"/><path d="M370 739l-9 10h5l-3 7 10-11h-5z" fill="#f0a020"/>
<rect x="404" y="737" width="20" height="20" fill="#fff"/><rect x="403" y="737" width="21" height="16" fill="#1a5cb0"/><text x="414" y="751" class="m" style="font:bold 15px 'Liberation Sans',sans-serif;fill:#fff;letter-spacing:0">W</text><path d="M404 753q10-3 20 3v2h-20z" fill="#c8dcf4"/>
<path d="M453 749q2-8 10-9 8 0 7 6 0 3-4 4 0 4-4 5-7 1-9-6z" fill="#c4d4e4"/><circle cx="458" cy="746" r="1.500" fill="#d04030"/><circle cx="462" cy="743" r="1.500" fill="#e0c030"/><circle cx="467" cy="745" r="1.500" fill="#50a050"/><circle cx="457" cy="751" r="1.500" fill="#3070c0"/>
<path d="M463 760l8-16" stroke="#e0a040" stroke-width="2"/><path d="M470 745l3-6 2 1-2 6z" fill="#c08040"/>
<path d="M1145 751l5-5 5 5" fill="none" stroke="#fff" stroke-width="1.200"/>
<rect x="1166" y="740" width="16" height="16" fill="#e01f26"/><path d="M1169 753q3-9 7-9 3 0 1 5 1 2 3 1M1172 749q3 1 5 0" fill="none" stroke="#fff" stroke-width="1.700"/>
<rect x="1193.500" y="745.500" width="12" height="8" fill="none" stroke="#fff"/><rect x="1195" y="747" width="6" height="5" fill="#fff"/><rect x="1206" y="748" width="1.500" height="3" fill="#fff"/><path d="M1188 743v3a2 2 0 0 0 4 0v-3M1189 743v-2M1191 743v-2M1190 748v3h3" fill="none" stroke="#fff"/>
<path d="M1218 756q1-8 9-11M1221 757q1-6 6-8M1224 757q1-3 3-4" fill="none" stroke="#bbb" stroke-width="1.300"/><path d="M1216 752q2-7 9-10" fill="none" stroke="#777" stroke-width="1"/><rect x="1226" y="753" width="3" height="4" fill="#eee"/>
<path d="M1239 746h3l5-4.500v13l-5-4.500h-3z" fill="none" stroke="#fff" stroke-width="1.100"/><path d="M1249 746q2 2 0 5M1251.500 744q3 4 0 9M1254 742q4 6 0 13" fill="none" stroke="#fff"/>
<path d="M1262 741h16v13h-6l-2 3-2-3h-6z" fill="#fff"/><path d="M1265 744.500h10M1265 747.500h10M1265 750.500h7" stroke="#000" stroke-width="1"/>
<text x="1321" y="742.500" class="m" style="font-size:12px;fill:#fff;letter-spacing:0">22.51</text>
<text x="1321" y="760" class="m" textLength="58" style="font-size:12px;fill:#fff;letter-spacing:0">18/03/2016</text>
<rect x="1362" y="728" width="1" height="40" fill="#333"/>
</svg>
</body></html>
